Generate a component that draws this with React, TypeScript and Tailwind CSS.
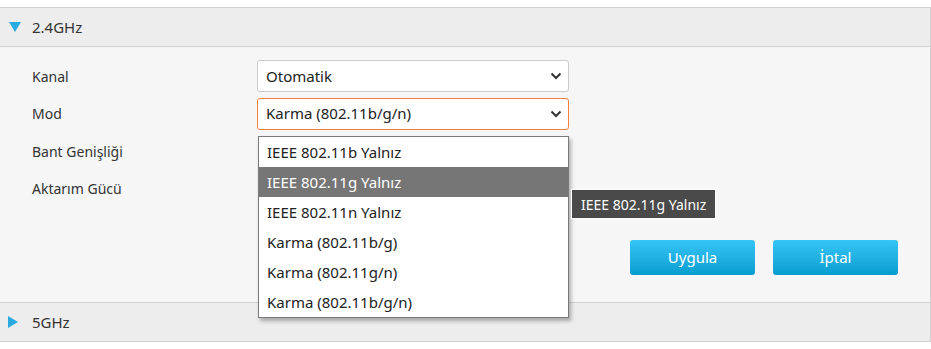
import React from "react";

const font = { fontFamily: '"Noto Sans", "Open Sans", sans-serif' };

function Chevron() {
  return (
    <svg width="12" height="8" viewBox="0 0 12 8" className="shrink-0">
      <path d="M1.5 1.5 L6 6 L10.5 1.5" fill="none" stroke="#333" strokeWidth="2" />
    </svg>
  );
}

function Select({ value, active }: { value: string; active?: boolean }) {
  return (
    <div
      className={
        "flex h-[32px] w-[312px] items-center justify-between rounded-[3px] border bg-white pl-[8px] pr-[6px] text-[15px] text-[#222] " +
        (active ? "border-[#f5803e]" : "border-[#cccccc]")
      }
    >
      <span>{value}</span>
      <Chevron />
    </div>
  );
}

const options = [
  "IEEE 802.11b Yalnız",
  "IEEE 802.11g Yalnız",
  "IEEE 802.11n Yalnız",
  "Karma (802.11b/g)",
  "Karma (802.11g/n)",
  "Karma (802.11b/g/n)",
];

function SectionHeader({ label, open }: { label: string; open?: boolean }) {
  return (
    <div className="flex h-[38px] items-center bg-[#ededed] text-[15px] text-[#333]">
      <div className="flex w-[32px] justify-center pl-[1px]">
        {open ? (
          <svg width="12" height="10" viewBox="0 0 12 10" className="-ml-[4px]">
            <path d="M0 0 H12 L6 10 Z" fill="#29abe2" />
          </svg>
        ) : (
          <svg width="10" height="12" viewBox="0 0 10 12" className="-ml-[8px]">
            <path d="M0 0 L10 6 L0 12 Z" fill="#29abe2" />
          </svg>
        )}
      </div>
      <span>{label}</span>
    </div>
  );
}

export default function App() {
  return (
    <div className="min-h-[349px] w-[931px] bg-white pt-[7px]" style={font}>
      <div className="w-[931px] border border-l-0 border-[#d0d0d0]">
        <SectionHeader label="2.4GHz" open />
        <div className="relative h-[256px] border-t border-[#d0d0d0] bg-[#f6f6f6] pl-[32px] pt-[13px] text-[14px] text-[#333]">
          <div className="flex h-[32px] items-center">
            <span className="w-[225px]">Kanal</span>
            <Select value="Otomatik" />
          </div>
          <div className="mt-[6px] flex h-[31px] items-center">
            <span className="w-[225px]">Mod</span>
            <Select value="Karma (802.11b/g/n)" active />
          </div>
          <div className="mt-[6px] flex h-[32px] items-center">
            <span className="w-[225px]">Bant Genişliği</span>
          </div>
          <div className="mt-[5px] flex h-[32px] items-center">
            <span className="w-[225px]">Aktarım Gücü</span>
          </div>
          <div className="mt-[36px] flex justify-end gap-[18px] pr-[32px]">
            <button className="h-[35px] w-[125px] rounded-[3px] bg-gradient-to-b from-[#35c5f7] to-[#039dcf] text-[15px] text-white">
              Uygula
            </button>
            <button className="h-[35px] w-[125px] rounded-[3px] bg-gradient-to-b from-[#35c5f7] to-[#039dcf] text-[15px] text-white">
              İptal
            </button>
          </div>

          <div className="absolute left-[258px] top-[89px] z-10 w-[311px] border border-[#7a7a7a] bg-white shadow-[2px_3px_4px_rgba(0,0,0,0.3)]">
            {options.map((o, i) => (
              <div
                key={o}
                className={
                  "flex h-[30px] items-center pl-[8px] text-[15px] " +
                  (i === 1 ? "bg-[#767676] text-white" : "text-[#222]")
                }
              >
                {o}
              </div>
            ))}
          </div>

          <div className="absolute left-[571px] top-[142px] z-20 flex h-[30px] w-[145px] items-center border border-white bg-[#4a4a4a] pl-[9px] text-[14px] text-white">
            IEEE 802.11g Yalnız
          </div>
        </div>
        <div className="border-t border-[#d0d0d0]">
          <SectionHeader label="5GHz" />
        </div>
      </div>
    </div>
  );
}
